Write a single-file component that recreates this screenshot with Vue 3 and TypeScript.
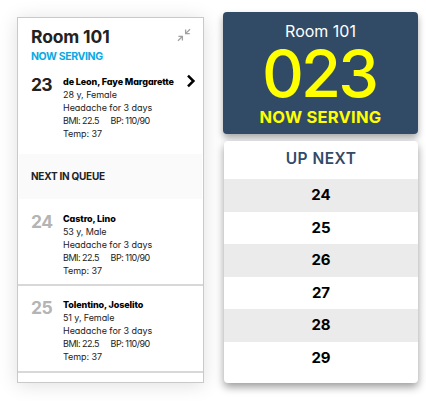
<script setup lang="ts">
interface Patient {
  no: number
  name: string
  age: string
  key: string
}

const current: Patient = { no: 23, name: 'de Leon, Faye Margarette', age: '28 y, Female', key: 'faye' }
const queue: Patient[] = [
  { no: 24, name: 'Castro, Lino', age: '53 y, Male', key: 'lino' },
  { no: 25, name: 'Tolentino, Joselito', age: '51 y, Female', key: 'joselito' },
]
const upNext: number[] = [24, 25, 26, 27, 28, 29]
</script>

<template>
  <main class="page">
    <section class="panel">
      <header class="head">
        <h1>Room 101</h1>
        <svg class="shrink" viewBox="0 0 14 14" width="14" height="14">
          <path d="M8.6 1.6V5.6H12.8M8.6 5.6L13 1.2M1.4 8.4H5.4V12.6M5.4 8.4L1 12.8" />
        </svg>
      </header>
      <p class="serving">NOW SERVING</p>
      <article class="patient current">
        <b class="no">{{ current.no }}</b>
        <div class="info">
          <strong :class="current.key">{{ current.name }}</strong>
          <span class="age">{{ current.age }}</span>
          <span class="reason">Headache for 3 days</span>
          <span class="vitals"><i class="bmi">BMI: 22.5</i><i class="bp">BP: 110/90</i></span>
          <span class="temp">Temp: 37</span>
        </div>
        <svg class="chevron" viewBox="0 0 10 14" width="10" height="14"><path d="M2 1.6L7.4 7l-5.4 5.4" /></svg>
      </article>
      <h2>NEXT IN QUEUE</h2>
      <article v-for="p in queue" :key="p.no" class="patient waiting">
        <b class="no">{{ p.no }}</b>
        <div class="info">
          <strong :class="p.key">{{ p.name }}</strong>
          <span class="age">{{ p.age }}</span>
          <span class="reason">Headache for 3 days</span>
          <span class="vitals"><i class="bmi">BMI: 22.5</i><i class="bp">BP: 110/90</i></span>
          <span class="temp">Temp: 37</span>
        </div>
      </article>
    </section>

    <div class="board">
      <section class="now">
        <div class="now-room">Room 101</div>
        <div class="now-no">023</div>
        <div class="now-label">NOW SERVING</div>
      </section>
      <section class="next">
        <div class="next-title">UP NEXT</div>
        <div v-for="n in upNext" :key="n" class="next-row">{{ n }}</div>
      </section>
    </div>
  </main>
</template>

<style>
body {
  background: #fff;
}
</style>

<style scoped>
* {
  box-sizing: border-box;
  margin: 0;
}
.page {
  display: flex;
  width: 426px;
  height: 401px;
  padding: 12px 0 0 17px;
  overflow: hidden;
  font-family: Inter, 'Liberation Sans', sans-serif;
  font-feature-settings: 'cv11';
  white-space: nowrap;
}
.panel {
  width: 187px;
  height: 366px;
  margin-top: 5px;
  overflow: hidden;
  border: 1px solid #c9c9c9;
  background: #fff;
  box-shadow: 0 2px 18px rgba(0, 0, 0, 0.13);
}
.head {
  display: flex;
  justify-content: space-between;
  height: 31px;
  padding: 8px 12px 0 13px;
}
h1 {
  font-size: 17.5px;
  line-height: 22px;
  letter-spacing: -0.15px;
  color: #222;
}
.shrink {
  margin-top: 2px;
}
.shrink path {
  fill: none;
  stroke: #a0a0a0;
  stroke-width: 1.3;
}
.serving {
  height: 22px;
  padding-left: 13px;
  font-size: 10.5px;
  font-weight: 700;
  line-height: 15px;
  letter-spacing: -0.38px;
  color: #0aa9e2;
}
.patient {
  display: flex;
  padding-left: 13px;
}
.current {
  height: 83px;
  padding-top: 4px;
}
.waiting {
  height: 87px;
  padding-top: 13px;
  border-bottom: 2px solid #d8d8d8;
}
.waiting + .waiting {
  padding-top: 12px;
}
.no {
  width: 32px;
  font-size: 17.5px;
  line-height: 19px;
  letter-spacing: -0.8px;
  color: #222;
}
.waiting .no {
  letter-spacing: -0.6px;
  color: #b4b4b4;
}
.info {
  display: flex;
  flex-direction: column;
  width: 123px;
  font-size: 9px;
  line-height: 13px;
  letter-spacing: -0.04px;
  color: #222;
}
strong {
  font-weight: 800;
  letter-spacing: -0.1px;
  color: #000;
}
.waiting .age {
  letter-spacing: -0.1px;
}
.vitals {
  display: flex;
}
.bmi,
.bp {
  font-style: normal;
  letter-spacing: -0.5px;
}
.bmi {
  width: 47.5px;
}
.temp {
  letter-spacing: -0.05px;
}
.chevron {
  margin-top: -1px;
}
.chevron path {
  fill: none;
  stroke: #000;
  stroke-width: 2.5;
}
h2 {
  height: 45px;
  margin: 0 1px;
  padding-left: 12px;
  background: #fafafa;
  font-size: 10px;
  font-weight: 700;
  line-height: 45px;
  letter-spacing: -0.25px;
  color: #222;
}
.board {
  width: 195px;
  margin-left: 19px;
}
.now {
  height: 122px;
  overflow: hidden;
  border-radius: 4px;
  background: #314b67;
  box-shadow: 0 4px 7px rgba(0, 0, 0, 0.35);
  text-align: center;
}
.now-room {
  height: 31px;
  padding-top: 9px;
  font-size: 16px;
  line-height: 20px;
  color: #fff;
}
.now-no {
  height: 64px;
  font-size: 65px;
  font-weight: 450;
  line-height: 62px;
  letter-spacing: -2.8px;
  text-indent: -2.8px;
  color: #ff0;
}
.now-label {
  font-size: 16.5px;
  font-weight: 700;
  line-height: 20px;
  letter-spacing: 0.25px;
  color: #ff0;
}
.next {
  height: 242px;
  margin: 7px 0 0 1px;
  overflow: hidden;
  border-radius: 4px;
  background: #fff;
  box-shadow: 0 4px 8px rgba(0, 0, 0, 0.4);
  text-align: center;
}
.next-title {
  height: 38px;
  font-size: 15.5px;
  font-weight: 600;
  line-height: 35px;
  letter-spacing: 0.5px;
  color: #314b67;
}
.next-row {
  height: 32.5px;
  font-size: 15px;
  font-weight: 700;
  line-height: 31.5px;
  color: #000;
}
.next-row:nth-child(even) {
  background: #ebebeb;
}
</style>
